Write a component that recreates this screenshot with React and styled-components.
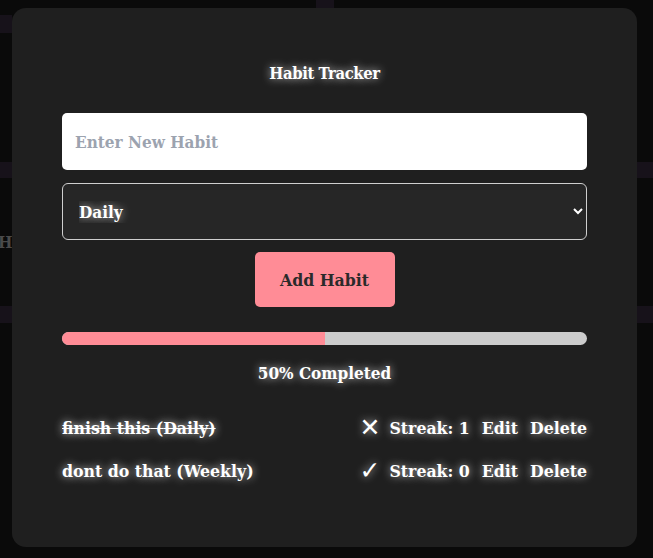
import React, { useState } from "react"
import styled, { createGlobalStyle } from "styled-components"

const GlobalStyle = createGlobalStyle`
  html, body {
    margin: 0;
    padding: 0;
    background: #0a0a0a;
    font-family: "DejaVu Serif Condensed", "DejaVu Serif", serif;
  }
  * { box-sizing: border-box; }
`

const glow = "0 0 8px rgba(255,255,255,0.75)"

const Page = styled.div`
  position: relative;
  width: 653px;
  height: 558px;
  overflow: hidden;
  padding: 8px 16px 11px 12px;
`

const Strip = styled.div`
  position: absolute;
  top: ${p => p.top}px;
  left: ${p => p.left}px;
  width: ${p => p.w}px;
  height: ${p => p.h}px;
  background: #17121a;
`

const GhostLetter = styled.span`
  position: absolute;
  left: -2px;
  top: 232px;
  font-size: 17px;
  font-weight: bold;
  color: #4a4a4a;
`

const Card = styled.div`
  position: relative;
  height: 539px;
  background: #1f1f1f;
  border-radius: 14px;
  padding: 54px 50px 0;
  display: flex;
  flex-direction: column;
  color: #fff;
  font-weight: bold;
`

const Title = styled.h1`
  margin: 0 0 27px;
  font-size: 16.5px;
  letter-spacing: -0.4px;
  font-weight: bold;
  text-align: center;
  line-height: 24px;
  text-shadow: ${glow};
`

const TextInput = styled.input`
  height: 57px;
  border: none;
  border-radius: 5px;
  padding: 0 13px;
  font-family: inherit;
  font-weight: bold;
  font-size: 17px;
  color: #222;
  background: #fff;
  outline: none;
  &::placeholder { color: #9ca3af; }
`

const Select = styled.select`
  margin-top: 13px;
  height: 57px;
  border: 1px solid #cfcfcf;
  border-radius: 6px;
  padding: 0 12px;
  font-family: inherit;
  font-weight: bold;
  font-size: 17px;
  color: #fff;
  background: #262626;
  text-shadow: ${glow};
  outline: none;
`

const AddButton = styled.button`
  align-self: center;
  margin-top: 12px;
  width: 140px;
  height: 55px;
  border: none;
  border-radius: 5px;
  background: #ff8c96;
  color: #2a2a2a;
  font-family: inherit;
  font-weight: bold;
  font-size: 17.5px;
`

const Track = styled.div`
  margin-top: 25px;
  height: 13px;
  border-radius: 7px;
  background: #cccccc;
  overflow: hidden;
`

const Fill = styled.div`
  height: 100%;
  background: #ff8c96;
`

const Percent = styled.div`
  margin-top: 16px;
  text-align: center;
  font-size: 17px;
  line-height: 24px;
  text-shadow: ${glow};
`

const List = styled.ul`
  list-style: none;
  margin: 31px 0 0;
  padding: 0;
  display: flex;
  flex-direction: column;
  gap: 19px;
`

const Row = styled.li`
  display: flex;
  align-items: center;
  justify-content: space-between;
  height: 24px;
  font-size: 17.5px;
  text-shadow: ${glow};
`

const Name = styled.span`
  text-decoration: ${p => (p.done ? "line-through" : "none")};
`

const Actions = styled.div`
  display: flex;
  align-items: center;
  gap: 12px;
`

const Toggle = styled.span`
  font-family: "DejaVu Sans", sans-serif;
  font-size: 25px;
  line-height: 24px;
  font-weight: bold;
  width: 18px;
  text-align: center;
`

const habitsData = [
  { name: "finish this", freq: "Daily", done: true, streak: 1 },
  { name: "dont do that", freq: "Weekly", done: false, streak: 0 },
]

export default function App() {
  const [habits] = useState(habitsData)
  const pct = Math.round((habits.filter(h => h.done).length / habits.length) * 100)

  return (
    <>
      <GlobalStyle />
      <Page>
        <Strip top={15} left={0} w={12} h={18} />
        <Strip top={162} left={0} w={12} h={16} />
        <Strip top={306} left={0} w={12} h={17} />
        <Strip top={162} left={637} w={16} h={16} />
        <Strip top={306} left={637} w={16} h={17} />
        <Strip top={0} left={316} w={18} h={8} />
        <GhostLetter>H</GhostLetter>
        <Card>
          <Title>Habit Tracker</Title>
          <TextInput placeholder="Enter New Habit" />
          <Select defaultValue="Daily">
            <option>Daily</option>
            <option>Weekly</option>
          </Select>
          <AddButton>Add Habit</AddButton>
          <Track>
            <Fill style={{ width: pct + "%" }} />
          </Track>
          <Percent>{pct}% Completed</Percent>
          <List>
            {habits.map(h => (
              <Row key={h.name}>
                <Name done={h.done}>{h.name} ({h.freq})</Name>
                <Actions>
                  <Toggle>{h.done ? "✕" : "✓"}</Toggle>
                  <span>Streak: {h.streak}</span>
                  <span>Edit</span>
                  <span>Delete</span>
                </Actions>
              </Row>
            ))}
          </List>
        </Card>
      </Page>
    </>
  )
}
